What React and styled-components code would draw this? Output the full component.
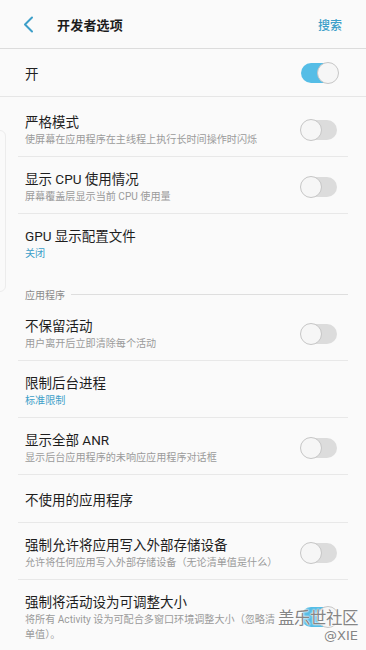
import React from "react";
import styled, { createGlobalStyle } from "styled-components";

const Global = createGlobalStyle`
  html, body { margin: 0; padding: 0; background: #fafafa; }
  body { font-family: Roboto, "Noto Sans CJK SC", sans-serif; -webkit-font-smoothing: antialiased; }
`;

const Page = styled.div`
  position: relative;
  width: 366px;
  height: 650px;
  overflow: hidden;
  background: #fafafa;
`;

const Header = styled.header`
  height: 48px;
  display: flex;
  align-items: center;
  padding: 0 24px 0 19px;
  border-bottom: 1px solid #dcdcdc;
`;

const Back = styled.button`
  all: unset;
  width: 18px;
  height: 20px;
  display: flex;
  align-items: center;
  justify-content: center;
  margin-right: 20px;
`;

const Title = styled.h1`
  flex: 1;
  margin: 0;
  font-size: 13px;
  font-weight: 700;
  color: #1c1c1c;
  letter-spacing: 0.2px;
`;

const Action = styled.span`
  font-size: 12px;
  font-weight: 500;
  color: #3d9fc9;
`;

const MasterRow = styled.div`
  height: 47px;
  display: flex;
  align-items: center;
  justify-content: space-between;
  padding: 0 27px 0 25px;
  border-bottom: 1px solid #e6e6e6;
  font-size: 13.5px;
  color: #222;
`;

const Group = styled.div`
  padding-top: ${(p) => p.$top || 0}px;
`;

const Row = styled.div`
  margin: 0 18px;
  min-height: 48px;
  box-sizing: border-box;
  padding: 12px 9px 9px 7px;
  display: flex;
  align-items: center;
  gap: 12px;
  border-bottom: ${(p) => (p.$last ? "none" : "1px solid #e8e8e8")};
`;

const Texts = styled.div`
  flex: 1;
  min-width: 0;
  display: flex;
  flex-direction: column;
`;

const RowTitle = styled.div`
  font-size: 13.5px;
  line-height: 20px;
  color: #1e1e1e;
`;

const RowSub = styled.div`
  font-size: 10.1px;
  line-height: 15px;
  color: ${(p) => (p.$accent ? "#3d9fc9" : "#9a9a9a")};
  padding-right: ${(p) => p.$pad || 0}px;
`;

const Section = styled.div`
  height: 34px;
  box-sizing: border-box;
  padding: 15px 18px 0 25px;
  display: flex;
  align-items: center;
  gap: 6px;
  font-size: 10px;
  color: #8a8a8a;
  &::after {
    content: "";
    flex: 1;
    height: 1px;
    background: #dedede;
  }
`;

const Track = styled.div`
  position: relative;
  flex: none;
  width: 36px;
  height: 20px;
  border-radius: 10px;
  margin-right: 2px;
  background: ${(p) => (p.$on ? "#55bde6" : "#dcdcdc")};
`;

const Thumb = styled.div`
  position: absolute;
  top: -1px;
  left: ${(p) => (p.$on ? "16px" : "-1px")};
  width: 20px;
  height: 20px;
  border-radius: 50%;
  background: #f6f6f6;
  border: 1px solid #c6c6c6;
`;

const Toggle = ({ on }) => (
  <Track $on={on}>
    <Thumb $on={on} />
  </Track>
);

const EdgeHandle = styled.div`
  position: absolute;
  left: -6px;
  top: 130px;
  width: 10px;
  height: 160px;
  border: 1px solid #ececec;
  border-radius: 6px;
`;

const Watermark = styled.div`
  position: absolute;
  right: 8px;
  bottom: 8px;
  display: flex;
  flex-direction: column;
  align-items: flex-end;
  color: #858585;
  text-shadow: 0 0 2px #fff, 0 0 2px #fff, 0 0 1px #fff;
  line-height: 1;
`;

const WmMain = styled.span`
  font-family: "Noto Sans CJK SC", sans-serif;
  font-size: 16.5px;
  letter-spacing: -0.5px;
`;

const WmSub = styled.span`
  font-family: "DejaVu Sans", sans-serif;
  font-size: 13px;
  margin-top: 4px;
`;

const items1 = [
  { t: "严格模式", s: "使屏幕在应用程序在主线程上执行长时间操作时闪烁", toggle: false },
  { t: "显示 CPU 使用情况", s: "屏幕覆盖层显示当前 CPU 使用量", toggle: false },
  { t: "GPU 显示配置文件", s: "关闭", accent: true, last: true },
];

const items2 = [
  { t: "不保留活动", s: "用户离开后立即清除每个活动", toggle: false },
  { t: "限制后台进程", s: "标准限制", accent: true },
  { t: "显示全部 ANR", s: "显示后台应用程序的未响应应用程序对话框", toggle: false },
  { t: "不使用的应用程序" },
  { t: "强制允许将应用写入外部存储设备", s: "允许将任何应用写入外部存储设备（无论清单值是什么）", toggle: false },
  { t: "强制将活动设为可调整大小", s: "将所有 Activity 设为可配合多窗口环境调整大小（忽略清单值）。", toggle: true, last: true, pad: 9 },
];

const renderRow = (it) => (
  <Row key={it.t} $last={it.last}>
    <Texts>
      <RowTitle>{it.t}</RowTitle>
      {it.s && (
        <RowSub $accent={it.accent} $pad={it.pad}>
          {it.s}
        </RowSub>
      )}
    </Texts>
    {it.toggle !== undefined && <Toggle on={it.toggle} />}
  </Row>
);

export default function App() {
  return (
    <Page>
      <Global />
      <Header>
        <Back aria-label="back">
          <svg width="12" height="17" viewBox="0 0 12 17">
            <path d="M10 1.5 L3 8.5 L10 15.5" fill="none" stroke="#3d9fc9" strokeWidth="2" strokeLinecap="round" strokeLinejoin="round" />
          </svg>
        </Back>
        <Title>开发者选项</Title>
        <Action>搜索</Action>
      </Header>
      <MasterRow>
        <span>开</span>
        <Toggle on />
      </MasterRow>
      <Group $top={3}>{items1.map(renderRow)}</Group>
      <Section>应用程序</Section>
      <Group>{items2.map(renderRow)}</Group>
      <EdgeHandle />
      <Watermark>
        <WmMain>盖乐世社区</WmMain>
        <WmSub>@XIE</WmSub>
      </Watermark>
    </Page>
  );
}
